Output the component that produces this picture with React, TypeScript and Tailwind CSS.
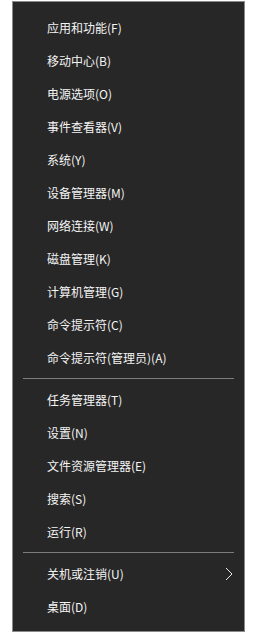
import React from 'react';

type Entry = { label: string } | { sep: true };

const entries: Entry[] = [
  { label: '应用和功能(F)' },
  { label: '移动中心(B)' },
  { label: '电源选项(O)' },
  { label: '事件查看器(V)' },
  { label: '系统(Y)' },
  { label: '设备管理器(M)' },
  { label: '网络连接(W)' },
  { label: '磁盘管理(K)' },
  { label: '计算机管理(G)' },
  { label: '命令提示符(C)' },
  { label: '命令提示符(管理员)(A)' },
  { sep: true },
  { label: '任务管理器(T)' },
  { label: '设置(N)' },
  { label: '文件资源管理器(E)' },
  { label: '搜索(S)' },
  { label: '运行(R)' },
  { sep: true },
  { label: '关机或注销(U)' },
  { label: '桌面(D)' },
];

export default function App() {
  return (
    <div className="w-[268px] h-[634px] bg-white pl-[12px] pt-[1px]">
      <div
        className="w-[233px] h-[631px] bg-[#272727] border border-[#8a8a8a] pt-[9px] text-[12px] text-[#f4f4f4]"
        style={{ fontFamily: '"Segoe UI", "Noto Sans CJK SC", "Noto Sans", sans-serif' }}
      >
        {entries.map((e, i) =>
          'sep' in e ? (
            <div key={i} className="h-[9px] flex items-center px-[10px]">
              <div className="h-px w-full bg-[#7c7c7c]" />
            </div>
          ) : (
            <div key={i} className="h-[33px] flex items-center justify-between pl-[34px] pr-[10px]">
              <span className="leading-none">{e.label}</span>
              {e.label.startsWith('关机') && (
                <svg width="8" height="14" viewBox="0 0 8 14" className="mr-[1px]">
                  <path d="M1 1 L7 7 L1 13" fill="none" stroke="#e8e8e8" strokeWidth="1" />
                </svg>
              )}
            </div>
          )
        )}
      </div>
    </div>
  );
}
